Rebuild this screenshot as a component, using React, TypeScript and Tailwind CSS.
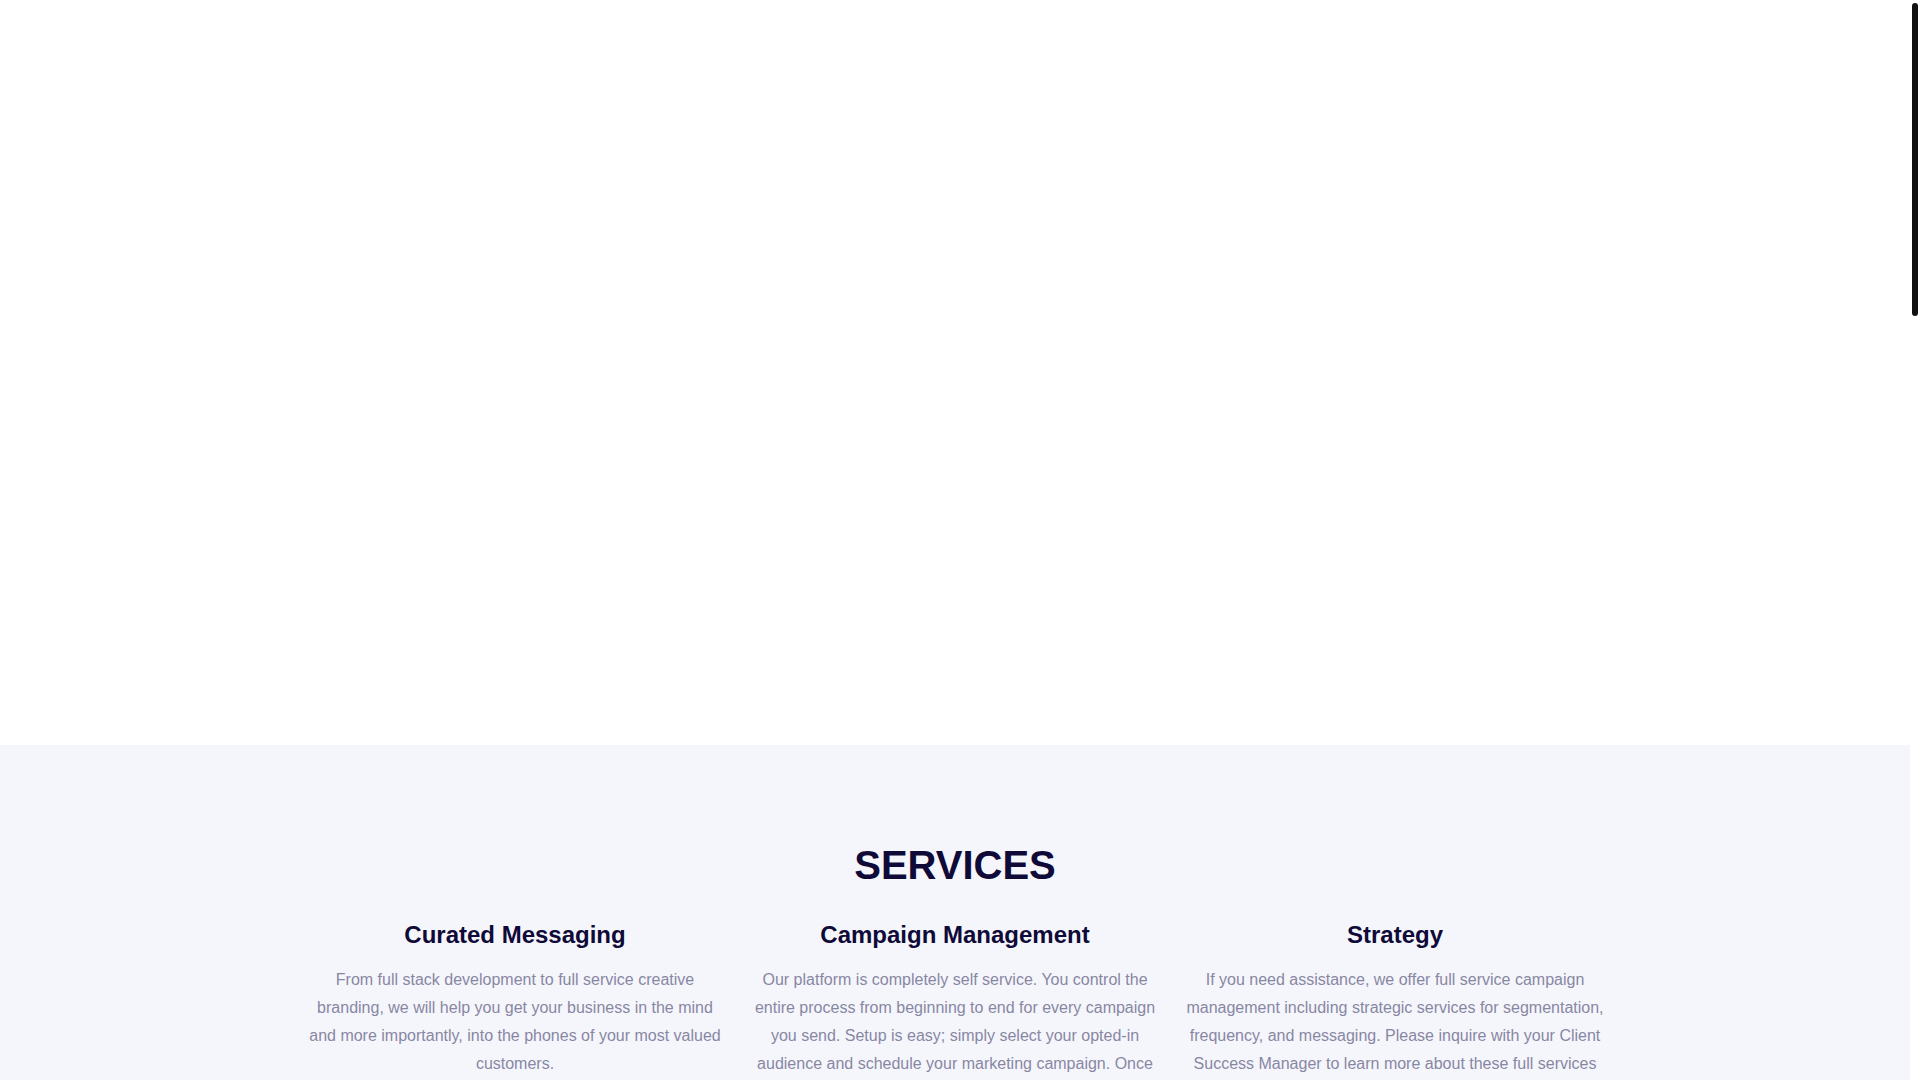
import React from "react";

const services = [
  {
    title: "Curated Messaging",
    body: "From full stack development to full service creative branding, we will help you get your business in the mind and more importantly, into the phones of your most valued customers.",
  },
  {
    title: "Campaign Management",
    body: "Our platform is completely self service. You control the entire process from beginning to end for every campaign you send. Setup is easy; simply select your opted-in audience and schedule your marketing campaign. Once your campaign is live, you can track every result in real time.",
  },
  {
    title: "Strategy",
    body: "If you need assistance, we offer full service campaign management including strategic services for segmentation, frequency, and messaging. Please inquire with your Client Success Manager to learn more about these full services offerings.",
  },
];

export default function App() {
  return (
    <div className="relative h-screen w-full overflow-hidden bg-white [font-family:'Liberation_Sans',Arial,sans-serif]">
      <div className="mr-[10px]">
        <div className="h-[745px] w-full bg-white" />
        <section className="min-h-[2935px] w-full bg-[#f5f6fb] pt-24">
          <h2 className="text-center text-[40px] font-bold leading-[48px] text-[#0f0a38]">
            SERVICES
          </h2>
          <div className="mx-auto mt-8 grid w-[1320px] grid-cols-3">
            {services.map((s) => (
              <div key={s.title} className="px-[10px] text-center">
                <h3 className="text-[24px] font-bold leading-[28.8px] text-[#0f0a38]">
                  {s.title}
                </h3>
                <p className="mt-4 text-[16px] leading-[28px] text-[#8887a3]">
                  {s.body}
                </p>
              </div>
            ))}
          </div>
        </section>
      </div>
      <div className="absolute right-0 top-0 flex h-full w-[10px] justify-center bg-white pt-[3px]">
        <div className="h-[313px] w-[6px] rounded-full bg-[#111111]" />
      </div>
    </div>
  );
}
